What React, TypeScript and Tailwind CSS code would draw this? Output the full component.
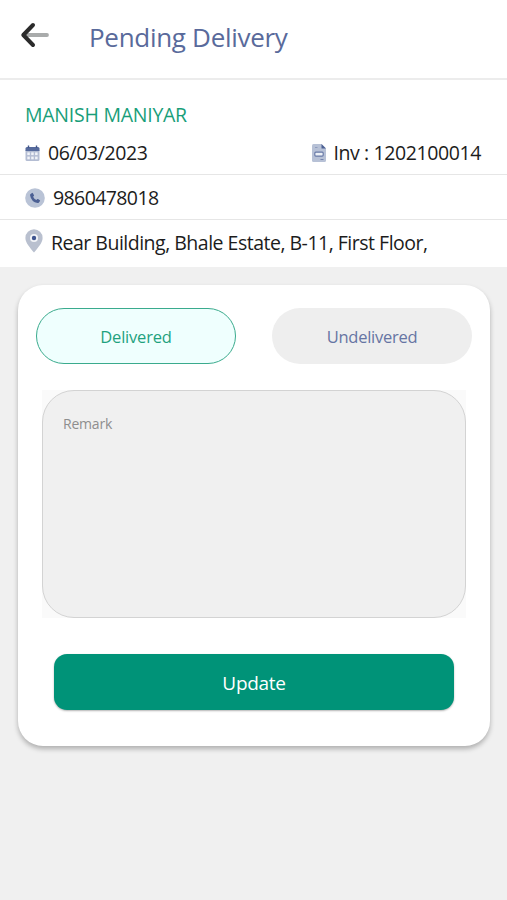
const BackIcon = () => (
  <svg width="30" height="28" viewBox="0 0 30 28" fill="none" strokeLinecap="round">
    <path d="M4 14H27" stroke="#a9abab" strokeWidth="3.8" />
    <path d="M13 4L3.3 14L13 24" stroke="#2b2b2b" strokeWidth="4" strokeLinejoin="round" />
  </svg>
);

const CalendarIcon = () => (
  <svg width="15" height="17" viewBox="0 0 15 17">
    <path d="M0.5 5H14.5V14.5Q14.5 16 13 16H2Q0.5 16 0.5 14.5Z" fill="#b4bdd3" />
    <path d="M0.5 6V3.5Q0.5 2 2 2H13Q14.5 2 14.5 3.5V6Z" fill="#566a9c" />
    <path d="M3.5 0.5V3M11.5 0.5V3" stroke="#41568b" strokeWidth="1.4" />
    <g fill="#f1f3f8">
      <rect x="2.3" y="7.4" width="2.5" height="2.7" />
      <rect x="6.2" y="7.4" width="2.5" height="2.7" />
      <rect x="10.1" y="7.4" width="2.5" height="2.7" />
      <rect x="2.3" y="11.6" width="2.5" height="2.7" />
      <rect x="6.2" y="11.6" width="2.5" height="2.7" />
      <rect x="10.1" y="11.6" width="2.5" height="2.7" />
    </g>
  </svg>
);

const InvoiceIcon = () => (
  <svg width="14" height="18" viewBox="0 0 14 18">
    <path d="M1.5 0H9.5L14 4.5V16.5Q14 18 12.5 18H1.5Q0 18 0 16.5V1.5Q0 0 1.5 0Z" fill="#b7c1d6" />
    <path d="M9.5 0L14 4.5H9.5Z" fill="#4c6093" />
    <path d="M3 3.5H5.5" stroke="#8f9dbe" strokeWidth="1" />
    <rect x="2.8" y="8.2" width="8.4" height="3.9" rx="1" fill="#edf1f7" stroke="#6a7ba8" strokeWidth="1.2" />
    <path d="M8.5 15.5H11.5" stroke="#7585ad" strokeWidth="1" />
  </svg>
);

const PhoneIcon = () => (
  <svg width="20" height="20" viewBox="0 0 20 20">
    <circle cx="10" cy="10" r="9.8" fill="#b9c3d6" />
    <path
      d="M5.3 6.3L7 4.9Q7.5 4.6 7.9 5.2L9 7.2Q9.2 7.7 8.8 8.1L8.1 8.8Q9.1 11 11.3 12L12.1 11.2Q12.5 10.8 13 11.1L14.8 12.2Q15.3 12.6 15 13.1L13.7 14.7Q13.3 15.1 12.6 15Q6.3 13.8 5.1 7.4Q5 6.7 5.3 6.3Z"
      fill="#4b5f93"
    />
  </svg>
);

const PinIcon = () => (
  <svg width="18" height="24" viewBox="0 0 18 24">
    <path d="M9 0.3A8.6 8.6 0 0 1 17.6 8.9C17.6 14 12.5 19 9 23.6C5.5 19 0.4 14 0.4 8.9A8.6 8.6 0 0 1 9 0.3Z" fill="#b9c0cf" />
    <circle cx="9" cy="9" r="4" fill="#f2f4f8" />
    <circle cx="9" cy="9" r="2.2" fill="#3f5590" />
  </svg>
);

const App = () => {
  return (
    <div className="flex h-[900px] w-[507px] flex-col overflow-hidden bg-[#f0f0f0] font-['Open_Sans','Noto_Sans',sans-serif] text-[#1c1c1c]">
      <header className="flex h-20 items-start border-b-2 border-[#ececec] bg-white pl-5 pt-[21px]">
        <button>
          <BackIcon />
        </button>
        <h1 className="ml-[39px] text-[26px] leading-[33px] tracking-[-0.3px] text-[#596a9b]">Pending Delivery</h1>
      </header>

      <section className="h-[95px] border-b-[1.5px] border-[#e6e6e6] bg-white pl-[25px] pr-[26px] pt-[21px]">
        <h2 className="text-[19.5px] leading-7 tracking-[-0.25px] text-[#189e79]">MANISH MANIYAR</h2>
        <div className="mt-[10px] flex h-7 items-center">
          <CalendarIcon />
          <span className="ml-2 text-[19.5px] leading-7 tracking-[-0.4px]">06/03/2023</span>
          <div className="ml-auto flex items-center">
            <InvoiceIcon />
            <span className="ml-[8px] text-[19.5px] leading-7 tracking-[-0.4px]">Inv : 1202100014</span>
          </div>
        </div>
      </section>

      <section className="flex h-[45px] items-center border-b-[1.5px] border-[#e6e6e6] bg-white pl-[25px] pt-px">
        <PhoneIcon />
        <span className="ml-2 text-[19.5px] leading-7 tracking-[-0.6px]">9860478018</span>
      </section>

      <section className="flex h-[47px] items-start bg-white pl-[25px] pt-[9px]">
        <PinIcon />
        <span className="ml-2 text-[19.5px] leading-7 tracking-[-0.5px]">Rear Building, Bhale Estate, B-11, First Floor,</span>
      </section>

      <main className="mx-[18px] mt-[18px] h-[461px] w-[472px] rounded-[25px] bg-white pt-[23px] shadow-[0_3px_5px_rgba(0,0,0,0.27)]">
        <div className="flex justify-between px-[18px]">
          <button className="h-14 w-[200px] rounded-full border-[1.5px] border-[#3aab8d] bg-[#effffe] pt-0.5 text-[16.5px] tracking-[-0.2px] text-[#1fa27e]">
            Delivered
          </button>
          <button className="h-14 w-[200px] rounded-full bg-[#eeeeee] pt-0.5 text-[16.5px] tracking-[-0.25px] text-[#6675a3]">
            Undelivered
          </button>
        </div>

        <div className="mx-6 mt-[26px] h-[228px] bg-[#fafafa]">
          <textarea
            placeholder="Remark"
            className="block h-[228px] w-[424px] resize-none rounded-[32px] border-[1.5px] border-[#d3d3d3] bg-[#f0f0f0] px-5 pt-[23px] text-[14px] leading-5 tracking-[-0.2px] outline-none placeholder:text-[#8e8e8e]"
          />
        </div>

        <button className="ml-9 mt-9 h-14 w-[400px] rounded-[13px] bg-[#009378] pt-0.5 text-[19px] tracking-[-0.3px] text-white shadow-[0_1px_2px_rgba(0,0,0,0.3)]">
          Update
        </button>
      </main>
    </div>
  );
};

export default App;
